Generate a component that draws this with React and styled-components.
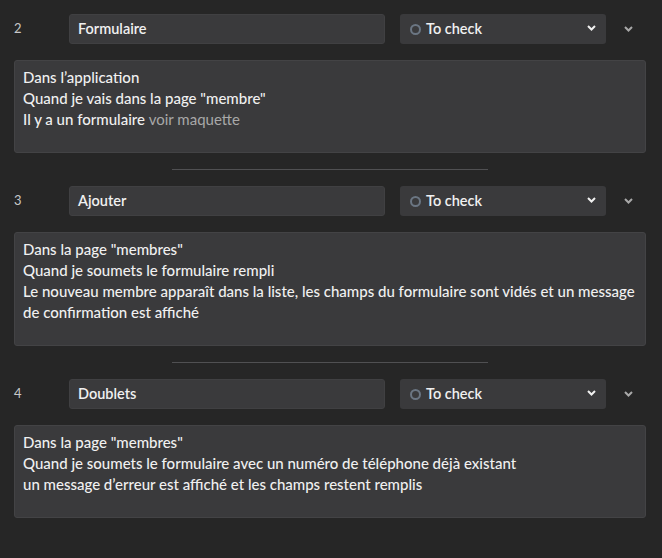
import React from "react";
import styled, { createGlobalStyle } from "styled-components";

const Global = createGlobalStyle`
  html, body { margin: 0; padding: 0; background: #262626; }
  body { font-family: Lato, "Noto Sans", sans-serif; color: #e8e8e8; }
  * { box-sizing: border-box; }
`;

const Page = styled.div`
  padding: 14px 16px 40px 14px;
  display: flex;
  flex-direction: column;
`;

const Row = styled.div`
  display: flex;
  align-items: center;
  height: 30px;
`;

const Num = styled.div`
  width: 55px;
  font-size: 13px;
  color: #c8c8c8;
  padding-bottom: 2px;
`;

const TitleBox = styled.div`
  flex: 1;
  height: 30px;
  margin-right: 15px;
  background: #3a3a3c;
  border: 1px solid #404042;
  border-radius: 3px;
  padding: 0 8px 2px;
  display: flex;
  align-items: center;
  font-size: 14.5px;
  font-weight: 600;
  color: #f0f0f0;
`;

const Select = styled.div`
  width: 206px;
  height: 30px;
  background: #3a3a3c;
  border-radius: 3px;
  display: flex;
  align-items: center;
  padding: 0 10px 2px 10px;
  gap: 5px;
  font-size: 14.5px;
  font-weight: 600;
  color: #f0f0f0;
`;

const Status = styled.span`
  flex: 1;
`;

const Ring = styled.span`
  width: 11px;
  height: 11px;
  border-radius: 50%;
  border: 2px solid #6b7683;
  margin-top: 2px;
`;

const Toggle = styled.div`
  width: 40px;
  display: flex;
  justify-content: center;
  padding-left: 4px;
`;

const Card = styled.div`
  margin-top: 16px;
  background: #3a3a3c;
  border: 1px solid #434345;
  border-radius: 3px;
  padding: 6px 8px 1px 8px;
  font-size: 15px;
  line-height: 21px;
  font-weight: 500;
  color: #f0f0f0;
`;

const Line = styled.div`
  min-height: 21px;
  white-space: nowrap;
`;

const Link = styled.span`
  color: #a8a8a8;
  font-weight: 400;
`;

const Divider = styled.div`
  width: 50%;
  align-self: center;
  height: 1px;
  background: #505052;
  margin: 16px 0;
`;

const Chevron = ({ color }) => (
  <svg width="9" height="6" viewBox="0 0 9 6">
    <path d="M1 1l3.5 3.5L8 1" fill="none" stroke={color} strokeWidth="2" />
  </svg>
);

const items = [
  {
    n: 2,
    title: "Formulaire",
    lines: [
      "Dans l’application",
      "Quand je vais dans la page \"membre\"",
      <>
        Il y a un formulaire <Link>voir maquette</Link>
      </>,
    ],
  },
  {
    n: 3,
    title: "Ajouter",
    lines: [
      "Dans la page \"membres\"",
      "Quand je soumets le formulaire rempli",
      "Le nouveau membre apparaît dans la liste, les champs du formulaire sont vidés et un message",
      "de confirmation est affiché",
    ],
  },
  {
    n: 4,
    title: "Doublets",
    lines: [
      "Dans la page \"membres\"",
      "Quand je soumets le formulaire avec un numéro de téléphone déjà existant",
      "un message d’erreur est affiché et les champs restent remplis",
    ],
  },
];

export default function App() {
  return (
    <>
      <Global />
      <Page>
        {items.map((it, i) => (
          <React.Fragment key={it.n}>
            {i > 0 && <Divider />}
            <Row>
              <Num>{it.n}</Num>
              <TitleBox>{it.title}</TitleBox>
              <Select>
                <Ring />
                <Status>To check</Status>
                <Chevron color="#f0f0f0" />
              </Select>
              <Toggle>
                <Chevron color="#a8a8a8" />
              </Toggle>
            </Row>
            <Card>
              {it.lines.map((l, j) => (
                <Line key={j}>{l}</Line>
              ))}
              <Line />
            </Card>
          </React.Fragment>
        ))}
      </Page>
    </>
  );
}
